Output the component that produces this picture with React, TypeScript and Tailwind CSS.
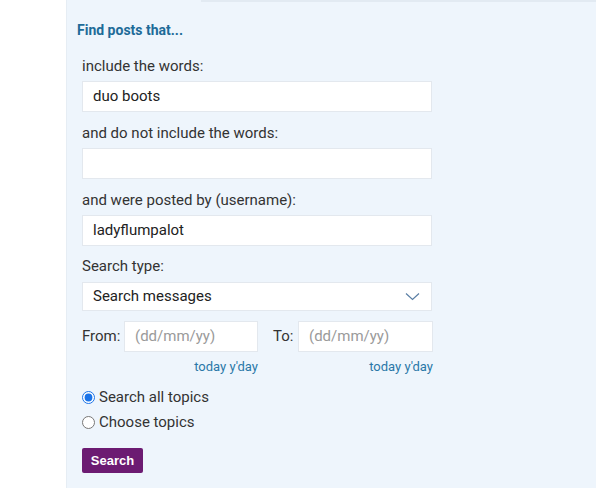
import React from "react";

function Field({ label, value }: { label: string; value?: string }) {
  return (
    <div className="flex flex-col">
      <div className="h-[20px] leading-[20px] text-[15px] text-[#333]">{label}</div>
      <div className="mt-[5px] h-[31px] w-[350px] bg-white border border-[#e3e8ee] flex items-center pl-[10px] text-[15px] text-[#222]">
        {value}
      </div>
    </div>
  );
}

export default function App() {
  return (
    <div className="w-[596px] h-[490px] bg-white overflow-hidden" style={{ fontFamily: "Roboto, 'Noto Sans', sans-serif" }}>
      <div className="ml-[66px] h-[488px] bg-[#eef5fc] border-l border-[#e6edf4] relative">
        <div className="absolute top-0 left-[134px] right-0 h-[2px] bg-[#e2eaf2]" />
        <div className="pt-[20px] pl-[10px]">
          <div className="h-[20px] leading-[20px] text-[14px] font-bold text-[#1d6b98]">Find posts that...</div>
        </div>
        <div className="pl-[15px] pt-[16px] flex flex-col">
          <Field label="include the words:" value="duo boots" />
          <div className="h-[11px]" />
          <Field label="and do not include the words:" />
          <div className="h-[11px]" />
          <Field label="and were posted by (username):" value="ladyflumpalot" />
          <div className="h-[10px]" />
          <div className="h-[20px] leading-[20px] text-[15px] text-[#333]">Search type:</div>
          <div className="mt-[6px] h-[29px] w-[350px] bg-white border border-[#e3e8ee] flex items-center justify-between pl-[10px] pr-[11px] text-[15px] text-[#222]">
            <span>Search messages</span>
            <svg width="15" height="9" viewBox="0 0 15 9" fill="none">
              <path d="M1 1.5 L7.5 7.5 L14 1.5" stroke="#5a7fa5" strokeWidth="1.2" />
            </svg>
          </div>
          <div className="mt-[10px] flex items-center w-[351px]">
            <span className="text-[15px] text-[#333] w-[42px]">From:</span>
            <div className="h-[31px] w-[134px] bg-white border border-[#e3e8ee] flex items-center pl-[10px] text-[15px] text-[#9a9a9a]">(dd/mm/yy)</div>
            <span className="ml-[15px] text-[15px] text-[#333] w-[25px]">To:</span>
            <div className="h-[31px] w-[135px] bg-white border border-[#e3e8ee] flex items-center pl-[10px] text-[15px] text-[#9a9a9a]">(dd/mm/yy)</div>
          </div>
          <div className="mt-[7px] flex w-[351px] text-[13px] leading-[16px] text-[#2a78a8]">
            <div className="w-[176px] text-right">today y'day</div>
            <div className="flex-1 text-right">today y'day</div>
          </div>
          <div className="mt-[10px] flex flex-col">
            <label className="h-[25px] flex items-center text-[15px] text-[#333]">
              <input type="radio" name="t" defaultChecked className="m-0 mr-[4px] w-[13px] h-[13px] accent-[#1a73e8]" />
              Search all topics
            </label>
            <label className="h-[25px] flex items-center text-[15px] text-[#333]">
              <input type="radio" name="t" className="m-0 mr-[4px] w-[13px] h-[13px]" />
              Choose topics
            </label>
          </div>
          <div className="mt-[13px]">
            <button className="h-[25px] w-[61px] rounded-[2px] bg-[#6c1b72] text-white text-[12px] font-bold" style={{ fontFamily: "'Liberation Sans', Arial, sans-serif", fontSize: "13px" }}>Search</button>
          </div>
        </div>
      </div>
    </div>
  );
}
